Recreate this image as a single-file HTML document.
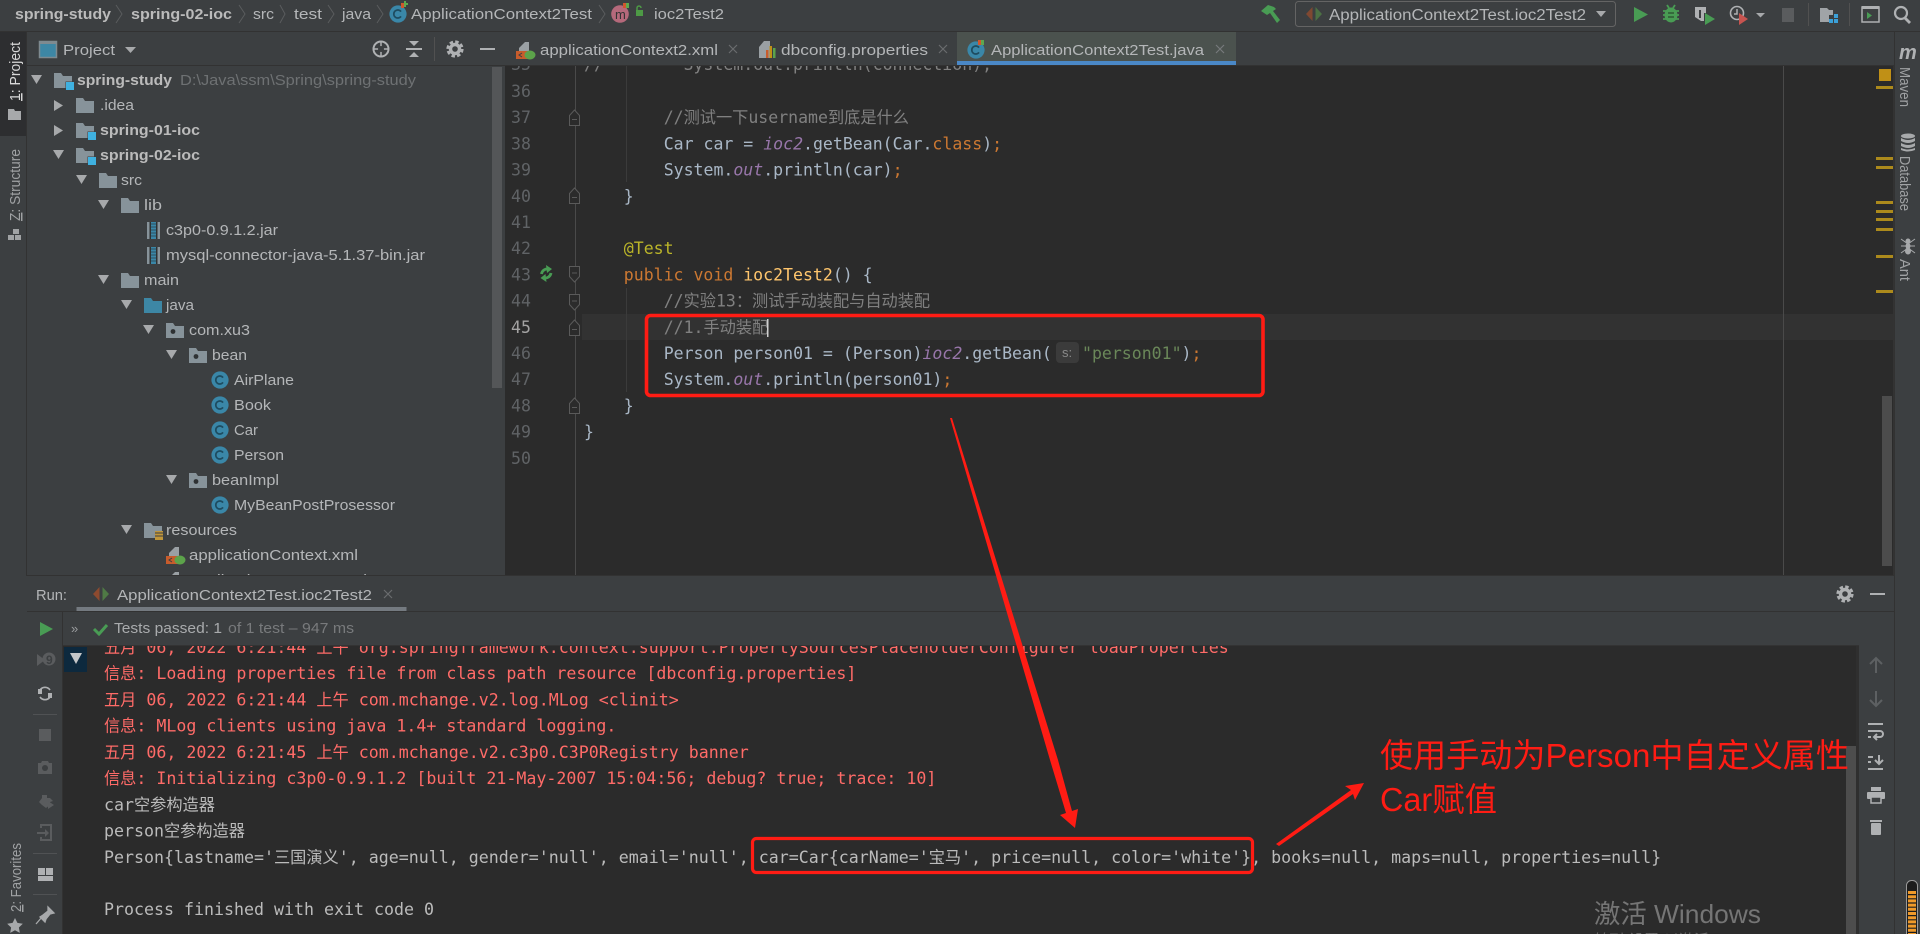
<!DOCTYPE html>
<html lang="zh"><head><meta charset="utf-8"><title>IDEA</title>
<style>
html,body{margin:0;padding:0;background:#3c3f41;overflow:hidden;width:1920px;height:934px}
svg{display:block}
text{white-space:pre}
.s{font-family:"Liberation Sans","Noto Sans CJK SC",sans-serif;font-size:15px;fill:#b4b6b8}
.b{font-weight:bold;fill:#bbbbbb}
.m{font-family:"DejaVu Sans Mono","Liberation Mono","Noto Sans CJK SC",monospace;font-size:16.55px;fill:#a9b7c6}
.cn{font-size:16.62px}
.c{font-family:"Noto Sans CJK SC",sans-serif;font-size:16.2px}
.n{fill:#606366}
.cm{fill:#808080}.k{fill:#cc7832}.f{fill:#ffc66d}.a{fill:#bbb529}.p{fill:#9876aa;font-style:italic}.t{fill:#6a8759}
.e{fill:#ff6b68}.o{fill:#bbbbbb}
.i{fill:#afb1b3}
.l{stroke:#afb1b3;fill:none}
.ar{fill:#a7a9ab}
.red{font-family:"Liberation Sans","Noto Sans CJK SC",sans-serif;font-size:33px;fill:#ff1c14}
</style></head><body>
<svg width="1920" height="934" viewBox="0 0 1920 934" xmlns="http://www.w3.org/2000/svg">
<defs>
<symbol id="fold" viewBox="0 0 18 15" width="18" height="15"><path d="M0 0h7l2 3h9v12H0z" fill="#87939a"/></symbol>
<symbol id="mod" viewBox="0 0 20 18" width="20" height="18"><path d="M0 0h7l2 3h9v12H0z" fill="#87939a"/><rect x="11.500" y="8.500" width="8" height="8" fill="#3c3f41"/><rect x="12" y="9" width="8" height="8" fill="#3fb1e0"/></symbol>
<symbol id="pkg" viewBox="0 0 18 15" width="18" height="15"><path d="M0 0h7l2 3h9v12H0z" fill="#87939a"/><circle cx="7" cy="8.500" r="2.400" fill="#2e3133"/></symbol>
<symbol id="cls" viewBox="0 0 18 18" width="18" height="18"><circle cx="9" cy="9" r="8.600" fill="#3a87a8"/><path d="M12 6.600A4 4 0 1 0 12 11.400" fill="none" stroke="#1e4c60" stroke-width="1.700"/></symbol>
<symbol id="jar" viewBox="0 0 13 17" width="13" height="17"><rect x="0" y="0" width="13" height="17" fill="#87939a"/><rect x="2.500" y="0" width="8" height="17" fill="#2e3133"/><rect x="4" y="0" width="5" height="17" fill="#3a87a8"/><path d="M4 2h5M4 5h5M4 8h5M4 11h5M4 14h5" stroke="#2d4f5e" stroke-width="1"/></symbol>
<symbol id="xml" viewBox="0 0 20 19" width="20" height="19"><path d="M3 7 9 1h4v9H3z" fill="#9aa0a4"/><rect x="0" y="10" width="15" height="8" fill="#c75c2c"/><path d="M6 12 3 14l3 2" stroke="#3c3f41" fill="none" stroke-width="1"/><ellipse cx="14" cy="14" rx="5.500" ry="4.500" fill="#5ca34a"/></symbol>
<symbol id="rt" viewBox="0 0 16 16" width="16" height="16"><path d="M6.500 1 0 8l6.500 7z" fill="#8d4a2f"/><path d="M9.500 1 16 8l-6.500 7z" fill="#4f7a45"/></symbol>
<symbol id="gear" viewBox="0 0 18 18" width="18" height="18"><circle cx="9" cy="9" r="4.500" fill="none" stroke="#afb1b3" stroke-width="3.400"/><circle cx="9" cy="9" r="7.300" fill="none" stroke="#afb1b3" stroke-width="2.600" stroke-dasharray="3.500 2.230"/></symbol>
<symbol id="foldS" viewBox="0 0 12 17" width="12" height="17"><path d="M.500.500h10v10L5.500 16 .500 10.500z" fill="#2b2b2b" stroke="#5a5a5a"/><path d="M3 7h5" stroke="#5a5a5a"/></symbol>
<symbol id="foldE" viewBox="0 0 12 17" width="12" height="17"><path d="M.500 16.500h10v-10L5.500 1 .500 6.500z" fill="#2b2b2b" stroke="#5a5a5a"/><path d="M3 10.500h5" stroke="#5a5a5a"/></symbol>
</defs>

<rect width="1920" height="934" fill="#3c3f41"/>

<!-- editor background -->
<rect x="505" y="65" width="1389" height="511" fill="#2b2b2b"/>
<rect x="582" y="314" width="1311" height="26" fill="#323232"/>
<line x1="575.500" y1="65" x2="575.500" y2="576" stroke="#4a4a4a"/>
<line x1="626.500" y1="65" x2="626.500" y2="182" stroke="#3b3b3b"/>
<line x1="626.500" y1="288" x2="626.500" y2="392" stroke="#3b3b3b"/>
<line x1="1783.500" y1="65" x2="1783.500" y2="576" stroke="#4a4a4a"/>

<!-- line numbers -->
<g class="m n">
<text x="511" y="70" class="m n">35</text>
<text x="511" y="97" class="m n">36</text>
<text x="511" y="123.200" class="m n">37</text>
<text x="511" y="149.400" class="m n">38</text>
<text x="511" y="175.600" class="m n">39</text>
<text x="511" y="201.800" class="m n">40</text>
<text x="511" y="228" class="m n">41</text>
<text x="511" y="254.200" class="m n">42</text>
<text x="511" y="280.400" class="m n">43</text>
<text x="511" y="306.600" class="m n">44</text>
<text x="511" y="332.800" class="m" fill="#a4a3a3" style="fill:#a4a3a3">45</text>
<text x="511" y="359" class="m n">46</text>
<text x="511" y="385.200" class="m n">47</text>
<text x="511" y="411.400" class="m n">48</text>
<text x="511" y="437.600" class="m n">49</text>
<text x="511" y="463.800" class="m n">50</text>
</g>
<!-- fold markers -->
<use href="#foldE" x="569" y="109"/><use href="#foldE" x="569" y="187"/>
<use href="#foldS" x="569" y="266"/><use href="#foldS" x="569" y="294"/>
<use href="#foldE" x="569" y="319"/><use href="#foldE" x="569" y="397"/>
<!-- gutter run icon -->
<path d="M541.500 274a6 6 0 0 1 7-5" fill="none" stroke="#499c54" stroke-width="2.800"/><path d="M546 265l6 4-5 4z" fill="#499c54"/>
<path d="M551 273a6 6 0 0 1-7 5" fill="none" stroke="#499c54" stroke-width="2.800"/><path d="M546.500 282l-6-4 5-4z" fill="#499c54"/>

<!-- code -->
<text x="584" y="70" class="m cm">//        System.out.println(connection);</text>
<text x="663.700" y="123.200" class="m cm">//<tspan class="c">测试一下</tspan>username<tspan class="c">到底是什么</tspan></text>
<text x="663.700" y="149.400" class="m">Car car = <tspan class="p">ioc2</tspan>.getBean(Car.<tspan class="k">class</tspan>)<tspan class="k">;</tspan></text>
<text x="663.700" y="175.600" class="m">System.<tspan class="p">out</tspan>.println(car)<tspan class="k">;</tspan></text>
<text x="623.800" y="201.800" class="m">}</text>
<text x="623.800" y="254.200" class="m a">@Test</text>
<text x="623.800" y="280.400" class="m"><tspan class="k">public void </tspan><tspan class="f">ioc2Test2</tspan>() {</text>
<text x="663.700" y="306.600" class="m cm">//<tspan class="c">实验</tspan>13<tspan class="c">：测试手动装配与自动装配</tspan></text>
<text x="663.700" y="332.800" class="m cm">//1.<tspan class="c">手动装配</tspan></text>
<rect x="767" y="319" width="1.500" height="18" fill="#cfcfcf"/>
<text x="663.700" y="359" class="m">Person person01 = (Person)<tspan class="p">ioc2</tspan>.getBean(</text>
<rect x="1056" y="342" width="23" height="21" rx="4" fill="#3b3b3b"/>
<text x="1062" y="357" style="font-family:'Liberation Sans',sans-serif;font-size:13px;fill:#8a8a8a">s:</text>
<text x="1082" y="359" class="m"><tspan class="t">"person01"</tspan>)<tspan class="k">;</tspan></text>
<text x="663.700" y="385.200" class="m">System.<tspan class="p">out</tspan>.println(person01)<tspan class="k">;</tspan></text>
<text x="623.800" y="411.400" class="m">}</text>
<text x="584" y="437.600" class="m">}</text>

<!-- editor stripe marks -->
<rect x="1882" y="396" width="10" height="170" fill="#4c4c4c"/>
<rect x="1893" y="65" width="1" height="511" fill="#333"/>
<rect x="1879" y="69" width="12" height="12" fill="#c09016"/>
<g fill="#ac8a1c">
<rect x="1876" y="86" width="17" height="3"/><rect x="1876" y="157" width="17" height="3"/><rect x="1876" y="166" width="17" height="3"/>
<rect x="1876" y="201" width="17" height="3"/><rect x="1876" y="210" width="17" height="3"/><rect x="1876" y="218" width="17" height="3"/>
<rect x="1876" y="228" width="17" height="3"/><rect x="1876" y="255" width="17" height="3"/><rect x="1876" y="290" width="17" height="3"/>
</g>

<!-- nav bar -->
<rect x="0" y="0" width="1920" height="31" fill="#3c3f41"/>
<rect x="0" y="31" width="1920" height="1" fill="#323232"/>
<text x="15" y="19" class="s b" textLength="96" lengthAdjust="spacingAndGlyphs">spring-study</text>
<text x="131" y="19" class="s b" textLength="101" lengthAdjust="spacingAndGlyphs">spring-02-ioc</text>
<text x="253" y="19" class="s" textLength="21" lengthAdjust="spacingAndGlyphs">src</text>
<text x="294" y="19" class="s" textLength="28" lengthAdjust="spacingAndGlyphs">test</text>
<text x="342" y="19" class="s" textLength="29" lengthAdjust="spacingAndGlyphs">java</text>
<text x="411" y="19" class="s" textLength="181" lengthAdjust="spacingAndGlyphs">ApplicationContext2Test</text>
<text x="654" y="19" class="s" textLength="70" lengthAdjust="spacingAndGlyphs">ioc2Test2</text>
<g fill="none" stroke="#5a5c5e" stroke-width="1">
<path d="M116 5l6 9-6 9M239 5l6 9-6 9M280 5l5 9-5 9M328 5l6 9-6 9M377 5l6 9-6 9M599 5l6 9-6 9"/>
</g>
<use href="#cls" x="389" y="5"/><path d="M402 3h2v-2h2v2h2v2h-2v2h-2v-2h-2z" fill="#5ea84e"/><rect x="401" y="3" width="3" height="5" fill="#d0562e"/>
<circle cx="620" cy="14" r="8.800" fill="#b5697b"/>
<text x="615" y="19" style="font-family:'Liberation Sans',sans-serif;font-size:13px;fill:#333">m</text>
<rect x="623" y="3" width="3" height="5" fill="#d0562e"/><rect x="626" y="3" width="3" height="5" fill="#5ea84e"/>
<path d="M636 16v-6h7v6z" fill="#4d9a45"/><path d="M637 10V8a2 2 0 0 1 4 0" stroke="#4d9a45" fill="none" stroke-width="1.500"/>

<!-- top toolbar -->
<path d="M1261 11l7-6 6 2 2 2-3 2 7 9-3 3-7-10-3 2z" fill="#499c54"/>
<rect x="1295.500" y="1.500" width="320" height="25" rx="3" fill="#3c3f41" stroke="#646464"/>
<use href="#rt" x="1306" y="6" opacity=".85"/>
<text x="1329" y="20" class="s" textLength="257" lengthAdjust="spacingAndGlyphs" style="font-size:15.500px">ApplicationContext2Test.ioc2Test2</text>
<path d="M1596 11h10l-5 6z" class="ar"/>
<path d="M1634 7l14 7.500-14 7.500z" fill="#499c54"/>
<ellipse cx="1671" cy="15" rx="6.500" ry="7.500" fill="#499c54"/><path d="M1663 11h16M1663 15h16M1663 19h16M1667 5l2 3M1675 5l-2 3" stroke="#499c54" stroke-width="1.800"/>
<path d="M1668 13h6M1668 17h6" stroke="#2f5a34" stroke-width="1.400"/>
<path d="M1695 7h11v6l-2 0v8h-3l-6-4z" fill="#afb1b3"/><path d="M1700 10v8" stroke="#3c3f41" stroke-width="2"/>
<path d="M1705 13l10 6-10 6z" fill="#499c54"/>
<circle cx="1737" cy="13" r="6.500" fill="none" stroke="#afb1b3" stroke-width="1.600"/><path d="M1737 9v5h-3" stroke="#afb1b3" fill="none" stroke-width="1.500"/>
<path d="M1739 13l9 6-9 6z" fill="#c75450"/>
<path d="M1756 13h9l-4.500 4.500z" class="ar"/>
<rect x="1782" y="8" width="12" height="14" fill="#5a5c5e"/>
<rect x="1808" y="3" width="1" height="23" fill="#515151"/>
<path d="M1820 8h7l2 2h4v5h-4v7h-9z" fill="#a0a4a7"/><g fill="#3ba0d8"><rect x="1834" y="14" width="4" height="4"/><rect x="1829" y="19" width="4" height="4"/><rect x="1834" y="19" width="4" height="4"/></g>
<rect x="1849" y="3" width="1" height="23" fill="#515151"/>
<rect x="1862" y="7" width="17" height="15" fill="none" stroke="#afb1b3" stroke-width="1.500"/><rect x="1862" y="6" width="17" height="3" fill="#afb1b3"/><path d="M1867 12l5 3.500-5 3.500z" fill="#499c54"/>
<circle cx="1901" cy="13" r="6" fill="none" stroke="#afb1b3" stroke-width="2.200"/><path d="M1905 18l5 5" stroke="#afb1b3" stroke-width="2.800"/>

<!-- project header -->
<rect x="27" y="32" width="478" height="33" fill="#3c3f41"/>
<rect x="27" y="65" width="478" height="1" fill="#323232"/>
<rect x="39.500" y="41.500" width="17" height="16" fill="#3d87a5" stroke="#7e8a90" stroke-width="1.500"/><rect x="39" y="41" width="18" height="3" fill="#7e8a90"/>
<text x="63" y="55" class="s" textLength="52" lengthAdjust="spacingAndGlyphs">Project</text>
<path d="M125 47h11l-5.500 6z" class="ar"/>
<circle cx="381" cy="49" r="7.500" class="l" stroke-width="2"/><path d="M381 41v16M373 49h16" stroke="#afb1b3" stroke-width="1.500"/><circle cx="381" cy="49" r="3" fill="#3c3f41"/>
<path d="M406 49h16" stroke="#afb1b3" stroke-width="2"/><path d="M409 41h10l-5 5zM409 57h10l-5-5z" class="i"/>
<rect x="434" y="37" width="1" height="24" fill="#515151"/>
<use href="#gear" x="446" y="40"/>
<rect x="480" y="48" width="15" height="2" class="i"/>

<!-- tree -->
<g>
<path d="M31 75h11l-5.500 9z" class="ar"/><use href="#mod" x="54" y="73"/>
<text x="77" y="85" class="s b" textLength="95" lengthAdjust="spacingAndGlyphs">spring-study</text>
<text x="180" y="85" class="s" style="fill:#6e7173" textLength="236" lengthAdjust="spacingAndGlyphs">D:\Java\ssm\Spring\spring-study</text>

<path d="M54 100l9 5.500-9 5.500z" class="ar"/><use href="#fold" x="76" y="98"/>
<text x="100" y="110" class="s" textLength="34" lengthAdjust="spacingAndGlyphs">.idea</text>

<path d="M54 125l9 5.500-9 5.500z" class="ar"/><use href="#mod" x="76" y="123"/>
<text x="100" y="135" class="s b" textLength="100" lengthAdjust="spacingAndGlyphs">spring-01-ioc</text>

<path d="M53 150h11l-5.500 9z" class="ar"/><use href="#mod" x="76" y="148"/>
<text x="100" y="160" class="s b" textLength="100" lengthAdjust="spacingAndGlyphs">spring-02-ioc</text>

<path d="M76 175h11l-5.500 9z" class="ar"/><use href="#fold" x="99" y="173"/>
<text x="121" y="185" class="s" textLength="21" lengthAdjust="spacingAndGlyphs">src</text>

<path d="M98 200h11l-5.500 9z" class="ar"/><use href="#fold" x="121" y="198"/>
<text x="144" y="210" class="s" textLength="18" lengthAdjust="spacingAndGlyphs">lib</text>

<use href="#jar" x="147" y="222"/>
<text x="166" y="235" class="s" textLength="112" lengthAdjust="spacingAndGlyphs">c3p0-0.9.1.2.jar</text>
<use href="#jar" x="147" y="247"/>
<text x="166" y="260" class="s" textLength="259" lengthAdjust="spacingAndGlyphs">mysql-connector-java-5.1.37-bin.jar</text>

<path d="M98 275h11l-5.500 9z" class="ar"/><use href="#fold" x="121" y="273"/>
<text x="144" y="285" class="s" textLength="35" lengthAdjust="spacingAndGlyphs">main</text>

<path d="M121 300h11l-5.500 9z" class="ar"/><path d="M144 298h7l2 3h9v12h-18z" fill="#3d87a5"/>
<text x="166" y="310" class="s" textLength="28" lengthAdjust="spacingAndGlyphs">java</text>

<path d="M143 325h11l-5.500 9z" class="ar"/><use href="#pkg" x="166" y="323"/>
<text x="189" y="335" class="s" textLength="61" lengthAdjust="spacingAndGlyphs">com.xu3</text>

<path d="M166 350h11l-5.500 9z" class="ar"/><use href="#pkg" x="189" y="348"/>
<text x="212" y="360" class="s" textLength="35" lengthAdjust="spacingAndGlyphs">bean</text>

<use href="#cls" x="211" y="371"/><text x="234" y="385" class="s" textLength="60" lengthAdjust="spacingAndGlyphs">AirPlane</text>
<use href="#cls" x="211" y="396"/><text x="234" y="410" class="s" textLength="37" lengthAdjust="spacingAndGlyphs">Book</text>
<use href="#cls" x="211" y="421"/><text x="234" y="435" class="s" textLength="24" lengthAdjust="spacingAndGlyphs">Car</text>
<use href="#cls" x="211" y="446"/><text x="234" y="460" class="s" textLength="50" lengthAdjust="spacingAndGlyphs">Person</text>

<path d="M166 475h11l-5.500 9z" class="ar"/><use href="#pkg" x="189" y="473"/>
<text x="212" y="485" class="s" textLength="67" lengthAdjust="spacingAndGlyphs">beanImpl</text>

<use href="#cls" x="211" y="496"/><text x="234" y="510" class="s" textLength="161" lengthAdjust="spacingAndGlyphs">MyBeanPostProsessor</text>

<path d="M121 525h11l-5.500 9z" class="ar"/><path d="M144 523h7l2 3h9v12h-18z" fill="#87939a"/><rect x="155" y="531" width="8" height="9" fill="#c0963a"/><path d="M155 533h8M155 536h8" stroke="#3c3f41"/>
<text x="166" y="535" class="s" textLength="71" lengthAdjust="spacingAndGlyphs">resources</text>

<use href="#xml" x="166" y="546"/>
<text x="189" y="560" class="s" textLength="169" lengthAdjust="spacingAndGlyphs">applicationContext.xml</text>
<use href="#xml" x="166" y="571"/>
<text x="189" y="585" class="s" textLength="178" lengthAdjust="spacingAndGlyphs">applicationContext2.xml</text>
</g>
<rect x="492" y="67" width="10" height="321" fill="#545658"/>

<!-- tabs -->
<rect x="505" y="32" width="1389" height="33" fill="#3c3f41"/>
<rect x="505" y="65" width="1389" height="1" fill="#323232"/>
<rect x="957" y="32" width="279" height="33" fill="#4b524e"/>
<rect x="957" y="61" width="279" height="4" fill="#4a88c7"/>
<use href="#xml" x="516" y="41"/>
<text x="540" y="55" class="s" textLength="178" lengthAdjust="spacingAndGlyphs">applicationContext2.xml</text>
<path d="M729 45l8 8m0-8l-8 8" stroke="#6a6c6e" stroke-width="1.200"/>
<path d="M759 47l5-6h6v17h-11z" fill="#9aa0a4"/><rect x="766" y="50" width="2.500" height="8" fill="#c75c2c"/><rect x="769.500" y="46" width="2.500" height="12" fill="#c09016"/><rect x="773" y="48" width="2.500" height="10" fill="#5ca34a"/>
<text x="781" y="55" class="s" textLength="147" lengthAdjust="spacingAndGlyphs">dbconfig.properties</text>
<path d="M939 45l8 8m0-8l-8 8" stroke="#6a6c6e" stroke-width="1.200"/>
<use href="#cls" x="967" y="41"/><rect x="978" y="40" width="3" height="5" fill="#d0562e"/><rect x="981" y="40" width="3" height="5" fill="#5ea84e"/>
<text x="991" y="55" class="s" textLength="213" lengthAdjust="spacingAndGlyphs">ApplicationContext2Test.java</text>
<path d="M1216 45l8 8m0-8l-8 8" stroke="#777a7c" stroke-width="1.200"/>

<!-- left stripe -->
<rect x="0" y="32" width="27" height="902" fill="#3c3f41"/>
<rect x="26" y="32" width="1" height="544" fill="#323232"/>
<rect x="0" y="32" width="26" height="104" fill="#2d2e30"/>
<text transform="translate(20,101) rotate(-90)" class="s" style="fill:#d8d8d8;font-size:14.500px" textLength="59" lengthAdjust="spacingAndGlyphs"><tspan text-decoration="underline">1</tspan>: Project</text>
<path d="M8 109h6l1 2h6v9H8z" fill="#a7a9ab"/>
<text transform="translate(20,221) rotate(-90)" class="s" style="fill:#a0a2a4;font-size:14.500px" textLength="72" lengthAdjust="spacingAndGlyphs"><tspan text-decoration="underline">Z</tspan>: Structure</text>
<path d="M13 229h6v5h-6zM8 235h6v5H8zM15 235h6v5h-6z" fill="#a0a2a4"/>
<text transform="translate(21,912) rotate(-90)" class="s" style="fill:#a0a2a4;font-size:14.500px" textLength="69" lengthAdjust="spacingAndGlyphs"><tspan text-decoration="underline">2</tspan>: Favorites</text>
<path d="M15 918l2.400 4.900 5.400.8-3.900 3.800.9 5.400-4.800-2.600-4.800 2.600.9-5.400-3.900-3.800 5.400-.8z" fill="#a7a9ab"/>

<!-- right stripe -->
<rect x="1894" y="32" width="26" height="902" fill="#3c3f41"/>
<rect x="1894" y="32" width="1" height="902" fill="#323232"/>
<text x="1899" y="59" style="font-family:'Liberation Sans',sans-serif;font-weight:bold;font-style:italic;font-size:20px;fill:#afb1b3">m</text>
<text transform="translate(1900,67) rotate(90)" class="s" style="fill:#a0a2a4;font-size:14.500px" textLength="40" lengthAdjust="spacingAndGlyphs">Maven</text>
<g fill="#a7a9ab"><ellipse cx="1908" cy="136" rx="7" ry="2.500"/><path d="M1901 138q7 4 14 0v3q-7 4-14 0zM1901 143q7 4 14 0v3q-7 4-14 0zM1901 148q7 3 14 0v2q-7 3-14 0z"/></g>
<text transform="translate(1900,156) rotate(90)" class="s" style="fill:#a0a2a4;font-size:14.500px" textLength="55" lengthAdjust="spacingAndGlyphs">Database</text>
<g fill="#a7a9ab"><circle cx="1908" cy="241" r="2.500"/><ellipse cx="1908" cy="246" rx="2.500" ry="3"/><ellipse cx="1908" cy="251" rx="3" ry="3.500"/><path d="M1901 239l7 5 7-5M1901 246h14M1901 253l7-5 7 5" stroke="#a7a9ab" fill="none" stroke-width="1"/></g>
<text transform="translate(1900,259) rotate(90)" class="s" style="fill:#a0a2a4;font-size:14.500px" textLength="22" lengthAdjust="spacingAndGlyphs">Ant</text>

<!-- console -->
<rect x="27" y="576" width="1867" height="358" fill="#3c3f41"/>
<rect x="63" y="646" width="1796" height="288" fill="#2b2b2b"/>
<text x="104" y="653" class="m cn e"><tspan class="c">五月</tspan> 06, 2022 6:21:44 <tspan class="c">上午</tspan> org.springframework.context.support.PropertySourcesPlaceholderConfigurer loadProperties</text>
<text x="104" y="679.200" class="m cn e"><tspan class="c">信息</tspan>: Loading properties file from class path resource [dbconfig.properties]</text>
<text x="104" y="705.500" class="m cn e"><tspan class="c">五月</tspan> 06, 2022 6:21:44 <tspan class="c">上午</tspan> com.mchange.v2.log.MLog &lt;clinit&gt;</text>
<text x="104" y="731.700" class="m cn e"><tspan class="c">信息</tspan>: MLog clients using java 1.4+ standard logging.</text>
<text x="104" y="758" class="m cn e"><tspan class="c">五月</tspan> 06, 2022 6:21:45 <tspan class="c">上午</tspan> com.mchange.v2.c3p0.C3P0Registry banner</text>
<text x="104" y="784" class="m cn e"><tspan class="c">信息</tspan>: Initializing c3p0-0.9.1.2 [built 21-May-2007 15:04:56; debug? true; trace: 10]</text>
<text x="104" y="810.300" class="m cn o">car<tspan class="c">空参构造器</tspan></text>
<text x="104" y="836.700" class="m cn o">person<tspan class="c">空参构造器</tspan></text>
<text x="104" y="863" class="m cn o">Person{lastname='<tspan class="c">三国演义</tspan>', age=null, gender='null', email='null', car=Car{carName='<tspan class="c">宝马</tspan>', price=null, color='white'}, books=null, maps=null, properties=null}</text>
<text x="104" y="915" class="m cn o">Process finished with exit code 0</text>
<rect x="64" y="647" width="23" height="25" fill="#0d293e"/>
<path d="M70 653h12l-6 11z" fill="#c4c6c8"/>
<rect x="1846" y="746" width="10" height="188" fill="#4d4d4d"/>
<rect x="1856" y="646" width="3" height="288" fill="#2f2f2f"/>

<!-- run header -->
<rect x="27" y="576" width="1867" height="70" fill="#3c3f41"/>
<rect x="27" y="575" width="1867" height="1" fill="#323232"/>
<rect x="27" y="611" width="1867" height="1" fill="#323232"/>
<rect x="63" y="645" width="1796" height="1" fill="#333"/>
<rect x="76.500" y="607" width="330" height="4" fill="#747a80"/>
<text x="36" y="600" class="s" textLength="31" lengthAdjust="spacingAndGlyphs">Run:</text>
<use href="#rt" x="93" y="586"/>
<text x="117" y="600" class="s" textLength="255" lengthAdjust="spacingAndGlyphs">ApplicationContext2Test.ioc2Test2</text>
<path d="M384 590l8 8m0-8l-8 8" stroke="#6a6c6e" stroke-width="1.200"/>
<use href="#gear" x="1836" y="585"/>
<rect x="1870" y="593" width="15" height="2" class="i"/>

<text x="71" y="633" class="s" style="font-size:13px;fill:#9a9c9e">»</text>
<path d="M94 629l5 5 8-9" fill="none" stroke="#499c54" stroke-width="3"/>
<text x="114" y="633" class="s" style="fill:#a9abad" textLength="108" lengthAdjust="spacingAndGlyphs">Tests passed: 1</text>
<text x="228" y="633" class="s" style="fill:#787a7c" textLength="126" lengthAdjust="spacingAndGlyphs">of 1 test – 947 ms</text>

<!-- left run toolbar -->
<rect x="62" y="611" width="1" height="323" fill="#323232"/>
<path d="M40 622l13 7-13 7z" fill="#499c54"/>
<path d="M37 654l8 6-8 6z" fill="#5a5c5e"/><circle cx="49" cy="659" r="6.500" fill="#5a5c5e"/><text x="46" y="664" style="font-family:'Liberation Sans',sans-serif;font-weight:bold;font-size:12px;fill:#3c3f41">9</text>
<path d="M40 690a6 6 0 0 1 10 0M50 697a6 6 0 0 1-10 0" fill="none" stroke="#afb1b3" stroke-width="1.600"/><rect x="38" y="689" width="4" height="5" class="i"/><rect x="48" y="693" width="4" height="5" class="i"/>
<rect x="33" y="714" width="24" height="1" fill="#505254"/>
<rect x="39" y="729" width="12" height="12" fill="#5a5c5e"/>
<path d="M38 763h3l1-2h6l1 2h3v11H38z" fill="#5a5c5e"/><circle cx="45" cy="768" r="3" fill="#3c3f41"/>
<path d="M42 795h5v3h3l3 3-3 1v3l-4 3-4-3-3-3 3-4z" fill="#5a5c5e"/><path d="M48 801l6 4-6 4z" fill="#5a5c5e"/>
<path d="M40 824h12v17H40v-4h2v2h8v-13h-8v2h-2zM37 832h8v-3l4 4-4 4v-3h-8z" fill="#5a5c5e"/>
<rect x="33" y="853" width="24" height="1" fill="#505254"/>
<path d="M38 868h7v7h-7zM46 868h7v7h-7zM38 876h15v5H38z" fill="#afb1b3"/>
<rect x="33" y="894" width="24" height="1" fill="#505254"/>
<path d="M48 907l6 6-4 1-4 5-1 3-5-5 3-2 5-4zM42 917l-6 7" fill="#a7a9ab" stroke="#a7a9ab" stroke-width="1.300"/>

<!-- right run toolbar -->
<g fill="none" stroke="#5d6062" stroke-width="2">
<path d="M1876 673v-15M1870 664l6-6 6 6"/><path d="M1876 691v15M1870 700l6 6 6-6"/>
</g>
<g fill="none" stroke="#afb1b3" stroke-width="2">
<path d="M1868 724h15M1868 731h12a3 3 0 0 1 0 6h-5M1868 737h3"/><path d="M1877 734l-3 3 3 3"/>
<path d="M1868 769h15M1868 757h5M1868 762h3"/><path d="M1879 755v9M1875 760l4 4 4-4"/>
</g>
<g fill="#afb1b3">
<rect x="1871" y="787" width="10" height="4"/><rect x="1867" y="792" width="18" height="7" rx="1"/><rect x="1871" y="797" width="10" height="6" fill="#3c3f41" stroke="#afb1b3" stroke-width="1.500"/>
<rect x="1870" y="820" width="12" height="2"/><rect x="1871" y="823" width="10" height="12" rx="1"/>
</g>

<!-- memory indicator -->
<rect x="1906.500" y="880.500" width="11" height="60" rx="5" fill="#1d1d1d" stroke="#9a9a9a"/>
<line x1="1912" y1="891" x2="1912" y2="934" stroke="#f09a2a" stroke-width="8" stroke-dasharray="3 1.200"/>

<!-- watermark -->
<text x="1594" y="923" style="font-family:'Liberation Sans','Noto Sans CJK SC',sans-serif;font-size:26px;fill:#757575" textLength="167" lengthAdjust="spacingAndGlyphs">激活 Windows</text>
<text x="1594" y="945" style="font-family:'Liberation Sans','Noto Sans CJK SC',sans-serif;font-size:15px;fill:#6a6a6a">转到“设置”以激活 Windows。</text>

<!-- annotations -->
<rect x="646.500" y="315.500" width="616.500" height="80" rx="4" fill="none" stroke="#ff1c14" stroke-width="3.600"/>
<rect x="752.500" y="838.500" width="500" height="34" rx="4" fill="none" stroke="#ff1c14" stroke-width="3.200"/>
<polygon points="950,418 952,418 1058,760 1072,811 1078,809 1075,828 1060,815 1066,813 1050,760" fill="#ff1c14"/>
<polygon points="1276,844 1279,846 1353,794 1355,800 1364,783 1345,786 1351,790" fill="#ff1c14"/>
<text x="1380" y="767" class="red" textLength="469" lengthAdjust="spacingAndGlyphs">使用手动为Person中自定义属性</text>
<text x="1380" y="811" class="red" textLength="117" lengthAdjust="spacingAndGlyphs">Car赋值</text>
</svg>
</body></html>
